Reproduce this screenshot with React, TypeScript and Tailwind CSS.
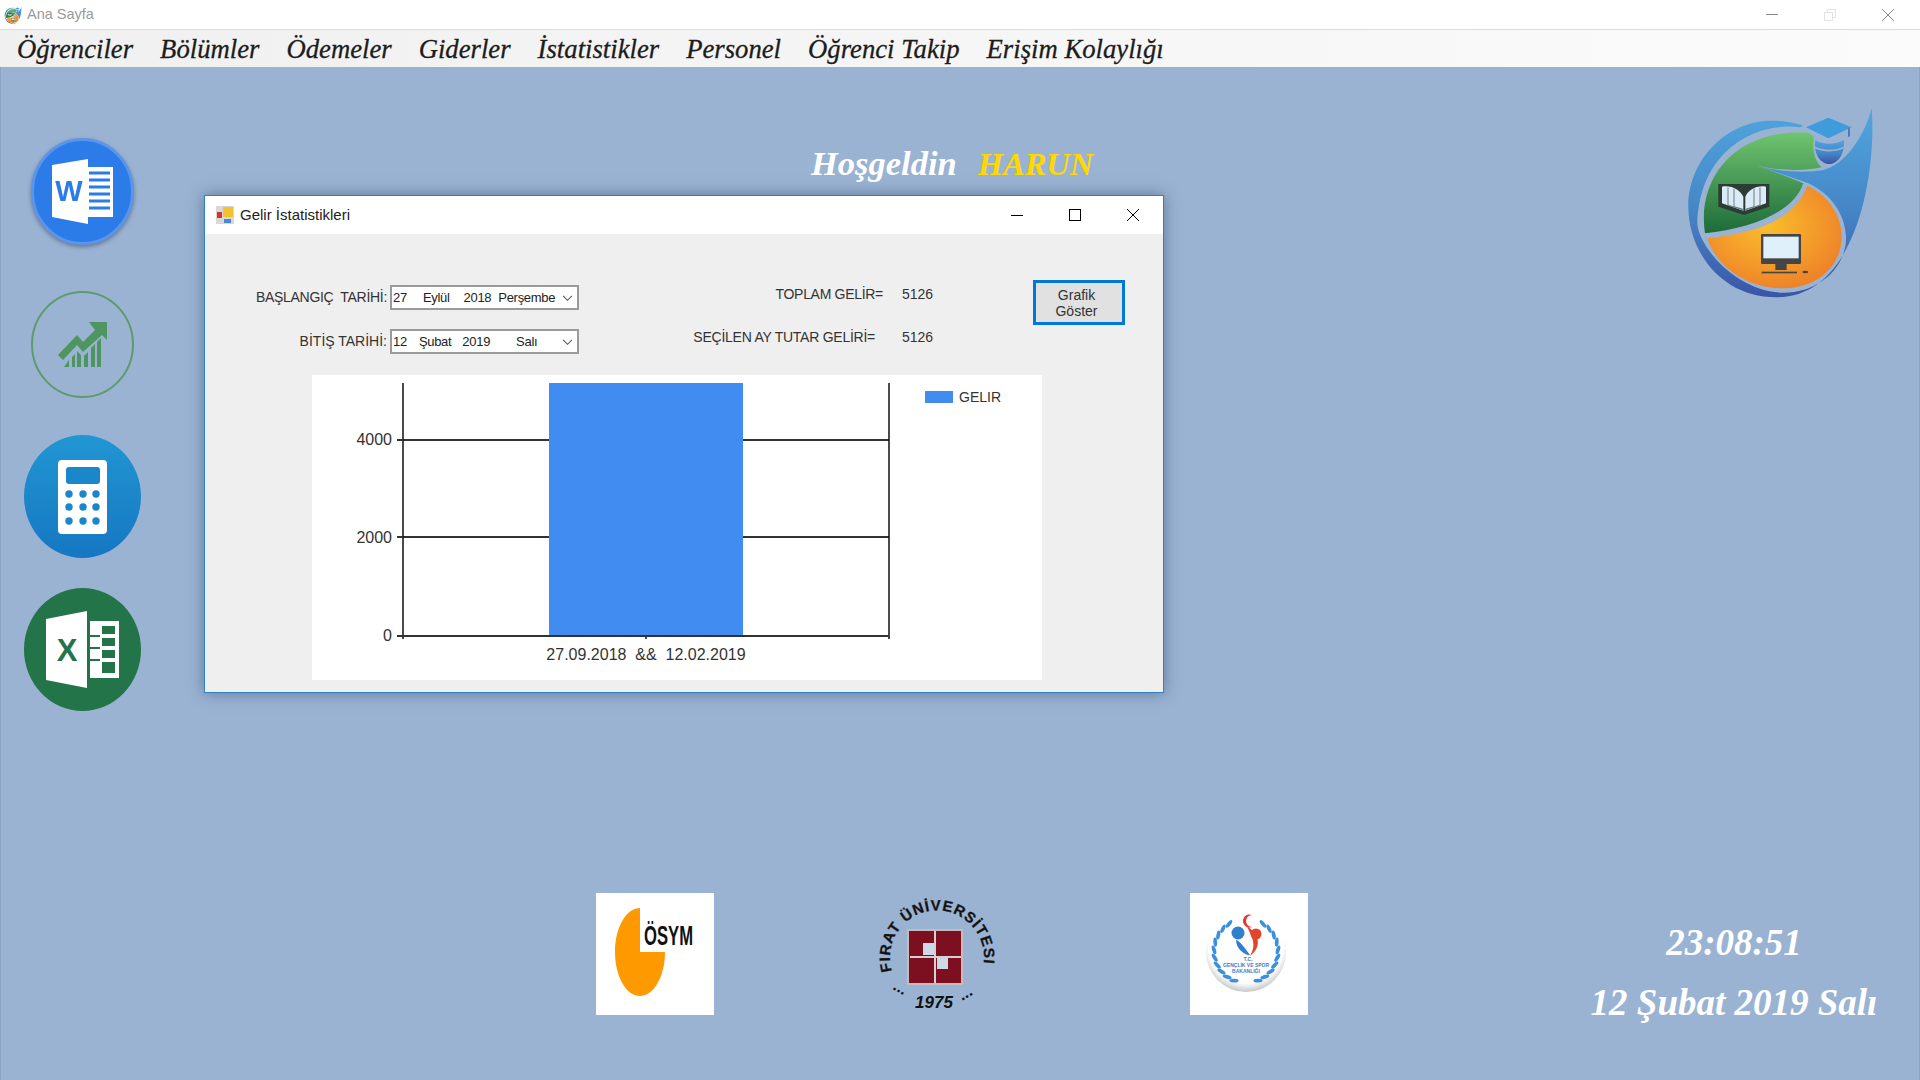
const serif = "font-['Liberation_Serif',serif]";
const sans = "font-['Liberation_Sans',Arial,sans-serif]";

const MENU_ITEMS = [
  "Öğrenciler",
  "Bölümler",
  "Ödemeler",
  "Giderler",
  "İstatistikler",
  "Personel",
  "Öğrenci Takip",
  "Erişim Kolaylığı",
];

// angles (deg, 0 = bottom) of the laurel leaves round the ministry badge
const LAUREL_ANGLES = [22, 36, 50, 64, 78, 92, 106, 120, 134, 148];

const Logo = ({ className, id }: { className: string; id: string }) => (
  <svg viewBox="0 0 720 660" className={className}>
    <defs>
      <linearGradient id={`${id}-blue`} x1="0" y1="0" x2="0" y2="1">
        <stop offset="0" stopColor="#4fa6de" />
        <stop offset="0.55" stopColor="#4585c6" />
        <stop offset="1" stopColor="#3a55a6" />
      </linearGradient>
      <linearGradient id={`${id}-green`} x1="0" y1="0" x2="0" y2="1">
        <stop offset="0" stopColor="#6fc46f" />
        <stop offset="1" stopColor="#1d6b3a" />
      </linearGradient>
      <radialGradient id={`${id}-orange`} cx="0.45" cy="0.4" r="0.6">
        <stop offset="0" stopColor="#fbbd2c" />
        <stop offset="1" stopColor="#ee8429" />
      </radialGradient>
    </defs>
    <path
      d="M635 55 C650 250 590 622 350 622 C180 622 85 480 85 350 C85 200 210 92 330 92 C370 92 400 97 430 107 L420 112 C300 95 120 170 112 400 C115 470 230 606 370 608 C480 608 560 530 558 440 C555 370 510 310 445 280 L295 228 C360 245 430 250 490 240 C550 225 610 150 635 55Z"
      fill={`url(#${id}-blue)`}
    />
    <path
      d="M135 430 C110 270 220 115 445 128 L462 140 C455 180 465 215 485 232 C420 245 350 240 295 228 C340 245 390 262 430 280 C400 370 270 415 135 430Z"
      fill={`url(#${id}-green)`}
    />
    <path
      d="M142 445 C270 430 400 400 442 287 C510 320 545 380 545 440 C545 530 470 595 370 595 C260 595 170 530 142 445Z"
      fill={`url(#${id}-orange)`}
    />
    <path d="M466 150 C490 165 525 165 552 150 C555 190 535 222 508 222 C480 222 460 190 466 150Z" fill={`url(#${id}-blue)`} />
    <path d="M464 172 C490 185 525 185 552 172" stroke="#9ab3d2" strokeWidth="5" fill="none" />
    <path d="M505 83 L575 112 L505 145 L438 112Z" fill="#3f9bdc" />
    <path d="M567 115 V140" stroke="#3f6fb8" strokeWidth="5" />
    <path d="M175 282 V350 L252 375 L328 350 V282" fill="#2e3a34" />
    <path d="M186 290 C215 285 240 300 250 320 V362 L186 340Z M318 290 C290 285 265 300 256 320 V362 L318 340Z" fill="#dcecf7" />
    <path d="M204 292 V345 L250 360 M222 296 V350 L250 358 M300 292 V345 L256 360 M282 296 V350 L256 358" fill="none" stroke="#6d7d86" strokeWidth="3" />
    <rect x="303" y="432" width="120" height="90" rx="4" fill="#454545" />
    <rect x="310" y="440" width="106" height="65" fill="#dff0fb" />
    <rect x="346" y="522" width="34" height="18" fill="#454545" />
    <rect x="305" y="545" width="106" height="5" fill="#454545" />
    <ellipse cx="436" cy="546" rx="9" ry="4" fill="#454545" />
  </svg>
);

const WordIcon = () => (
  <svg viewBox="0 0 103 107" className="w-[103px] h-[107px] drop-shadow-[0_2px_2px_rgba(60,70,90,0.55)]">
    <ellipse cx="51.5" cy="53.5" rx="50" ry="52" fill="#2b7be8" stroke="#5b95ea" strokeWidth="3" />
    <path d="M21 27 L57 21 V86 L21 79Z" fill="#fff" />
    <rect x="57" y="29" width="25" height="50" fill="#fff" />
    <path d="M58 35 H79 M58 42 H79 M58 49 H79 M58 56 H79 M58 63 H79 M58 70 H79" stroke="#2b7be8" strokeWidth="3" />
    <text x="38" y="63" textAnchor="middle" fontSize="29" fontWeight="700" fill="#2b7be8" fontFamily="Liberation Sans">W</text>
  </svg>
);

const ChartIcon = () => (
  <svg viewBox="0 0 103 107" className="w-[103px] h-[107px]">
    <ellipse cx="51.5" cy="53.5" rx="50.5" ry="52.5" fill="none" stroke="#5c9b6c" strokeWidth="2" />
    <path d="M27 64 L46 44 L52 51 L64 39 L58 31 L76 31 L76 49 L71 44 L52 61 L46 54 L32 69Z" fill="#4f9560" />
    <path d="M33 76 L38 69 V76Z M41 76 V66 L44 63 V76Z M46 76 V60 L50 64 V76Z M53 76 V65 L57 61 V76Z M60 76 V57 L64 53 V76Z M66 76 V51 L70 47 V76Z" fill="#4f9560" />
  </svg>
);

const CalculatorIcon = () => (
  <svg viewBox="0 0 117 123" className="w-[117px] h-[123px]">
    <defs>
      <linearGradient id="calc-bg" x1="0" y1="0" x2="0" y2="1">
        <stop offset="0" stopColor="#2196d3" />
        <stop offset="1" stopColor="#1677c2" />
      </linearGradient>
    </defs>
    <ellipse cx="58.5" cy="61.5" rx="58.5" ry="61.5" fill="url(#calc-bg)" />
    <rect x="34" y="25" width="49" height="74" rx="4" fill="#fff" />
    <rect x="42" y="32" width="34" height="17" rx="3" fill="#1b87cb" />
    {[45, 59, 72].map((x) =>
      [59, 72, 86].map((y) => <circle key={`${x}-${y}`} cx={x} cy={y} r="3.7" fill="#1b87cb" />),
    )}
  </svg>
);

const ExcelIcon = () => (
  <svg viewBox="0 0 117 123" className="w-[117px] h-[123px]">
    <ellipse cx="58.5" cy="61.5" rx="58.5" ry="61.5" fill="#24744a" />
    <path d="M22 31 L63 23 V100 L22 92Z" fill="#fff" />
    <rect x="66" y="33" width="29" height="57" fill="#fff" />
    <path
      d="M78 38 H91 V46 H78Z M78 50 H91 V58 H78Z M78 62 H91 V70 H78Z M78 74 H91 V85 H78Z M66 47 H76 V49 H66Z M66 59 H76 V61 H66Z M66 71 H76 V73 H66Z"
      fill="#24744a"
    />
    <text x="43" y="73" textAnchor="middle" fontSize="31" fontWeight="700" fill="#24744a" fontFamily="Liberation Sans">X</text>
  </svg>
);

const OsymLogo = () => (
  <div className="w-[118px] h-[122px] bg-white">
    <svg viewBox="0 0 118 122" className="w-full h-full">
      <path d="M44 59 V15 C30 15 19 35 19 59 C19 83 30 103 44 103 C58 103 69 83 69 59Z" fill="#ff9900" />
      <text x="48" y="52" fontSize="27" fontWeight="700" textLength="49" lengthAdjust="spacingAndGlyphs" fill="#111" fontFamily="Liberation Sans">ÖSYM</text>
    </svg>
  </div>
);

const FiratLogo = () => (
  <svg viewBox="0 0 120 122" className="w-[120px] h-[122px]">
    <defs>
      <path id="firat-arc" d="M17 78 A47 47 0 1 1 107 78" />
    </defs>
    <text fontSize="15" fontWeight="700" fill="#111" stroke="#222" strokeWidth="0.3" fontFamily="Liberation Sans" letterSpacing="0.9">
      <textPath href="#firat-arc" startOffset="0">FIRAT ÜNİVERSİTESİ</textPath>
    </text>
    <rect x="32" y="36" width="56" height="56" fill="#c9b9bb" />
    <rect x="34" y="38" width="52" height="52" fill="#7c1020" />
    <path d="M35 64 H60 M60 38 V90 M60 64 H86" stroke="#d8d0d0" strokeWidth="2" />
    <rect x="48" y="50" width="11" height="12" fill="#cdd9e6" />
    <rect x="62" y="65" width="11" height="11" fill="#cdd9e6" />
    <text x="17" y="96" fontSize="16" fontWeight="700" fill="#111" fontFamily="Liberation Sans" transform="rotate(28 17 96)">...</text>
    <text x="87" y="108" fontSize="16" fontWeight="700" fill="#111" fontFamily="Liberation Sans" transform="rotate(-30 87 108)">...</text>
    <text x="59" y="115" textAnchor="middle" fontSize="17" fontWeight="700" fontStyle="italic" fill="#111" fontFamily="Liberation Sans">1975</text>
  </svg>
);

const BakanlikLogo = () => (
  <div className="w-[118px] h-[122px] bg-white">
    <svg viewBox="0 0 118 122" className="w-full h-full">
      <defs>
        <radialGradient id="badge-bg" cx="0.5" cy="0.42" r="0.6">
          <stop offset="0.78" stopColor="#ffffff" />
          <stop offset="1" stopColor="#bdbdbd" />
        </radialGradient>
      </defs>
      <ellipse cx="56" cy="59" rx="40" ry="40" fill="url(#badge-bg)" />
      {LAUREL_ANGLES.map((deg) => {
        const rad = (deg * Math.PI) / 180;
        const dx = 32 * Math.sin(rad);
        const y = 58 + 32 * Math.cos(rad);
        return (
          <g key={deg} fill="#3b8fdc">
            <ellipse cx={56 - dx} cy={y} rx="1.9" ry="4.6" transform={`rotate(${70 + deg} ${56 - dx} ${y})`} />
            <ellipse cx={56 + dx} cy={y} rx="1.9" ry="4.6" transform={`rotate(${-70 - deg} ${56 + dx} ${y})`} />
          </g>
        );
      })}
      <path d="M62 22 A6.5 6.5 0 1 0 62 34 A5.5 5.5 0 1 1 62 22Z" fill="#e2352b" />
      <circle cx="48" cy="40" r="6.5" fill="#2f7fd0" />
      <circle cx="66" cy="41" r="5.5" fill="#e2452b" />
      <path d="M46 47 C50 48 54 54 60 62 C58 63 46 58 46 47Z" fill="#2f7fd0" />
      <path d="M57 33 C60 42 68 50 60 63 C72 54 70 42 57 33Z" fill="#e2452b" />
      <text x="58" y="68" textAnchor="middle" fontSize="5" fontWeight="700" fill="#3b80c4" fontFamily="Liberation Sans">T.C.</text>
      <text x="56" y="74" textAnchor="middle" fontSize="5" fontWeight="700" fill="#3b80c4" fontFamily="Liberation Sans">GENÇLİK VE SPOR</text>
      <text x="56" y="80" textAnchor="middle" fontSize="5" fontWeight="700" fill="#3b80c4" fontFamily="Liberation Sans">BAKANLIĞI</text>
    </svg>
  </div>
);

const DatePicker = ({ parts }: { parts: [string, number][] }) => (
  <div className="relative flex items-center w-[189px] h-[25px] bg-white border-2 border-[#9a9a9a] pl-[1px] text-[13px] tracking-[-0.3px] text-[#222] whitespace-nowrap">
    {parts.map(([text, margin]) => (
      <span key={text} className="shrink-0" style={{ marginLeft: margin }}>
        {text}
      </span>
    ))}
    <svg viewBox="0 0 12 8" className="absolute right-[4px] top-[8px] w-[11px] h-[7px]">
      <path d="M1 1 L6 6 L11 1" fill="none" stroke="#555" strokeWidth="1.2" />
    </svg>
  </div>
);

const RevenueChart = () => (
  <div className="ml-[107px] mt-[21px] w-[730px] h-[305px] bg-white">
    <svg viewBox="0 0 730 305" className="w-full h-full" fontFamily="Liberation Sans">
      <path d="M91 65 H577 M91 162 H577" stroke="#333" strokeWidth="2" />
      <rect x="237" y="8" width="194" height="253" fill="#418cf0" />
      <path d="M91 8 V264 M577 8 V264 M334 261 V264" stroke="#111" strokeWidth="1.5" />
      <path d="M85 65 H91 M85 162 H91 M85 261 H577" stroke="#333" strokeWidth="2" />
      <g fontSize="16" fill="#333" textAnchor="end">
        <text x="80" y="70">4000</text>
        <text x="80" y="168">2000</text>
        <text x="80" y="266">0</text>
      </g>
      <text x="334" y="285" fontSize="16" fill="#333" textAnchor="middle" xmlSpace="preserve">27.09.2018  &amp;&amp;  12.02.2019</text>
      <rect x="613" y="16" width="28" height="12" fill="#418cf0" />
      <text x="647" y="27" fontSize="14" fill="#333">GELIR</text>
    </svg>
  </div>
);

const GelirDialog = () => (
  <div className={`absolute left-[204px] top-[195px] w-[960px] h-[498px] flex flex-col bg-[#efefef] border border-[#2f80c4] shadow-[0_0_14px_rgba(50,70,100,0.55)] ${sans}`}>
    {/* Title bar */}
    <div className="flex items-center h-[38px] bg-white shrink-0 pl-[11px]">
      <svg viewBox="0 0 18 18" className="w-[18px] h-[18px]">
        <rect width="18" height="18" fill="#d8d8d8" />
        <rect x="7" y="1" width="10" height="10" fill="#f2c230" />
        <rect x="1" y="6" width="5" height="6" fill="#d8332a" />
        <rect x="8" y="13" width="7" height="4" fill="#4f86d8" />
      </svg>
      <span className="ml-[6px] text-[15px] text-[#222]">Gelir İstatistikleri</span>
      <div className="ml-auto flex items-center gap-[46px] pr-[24px]">
        <span className="w-[12px] h-px bg-black" />
        <span className="w-[12px] h-[12px] border border-black" />
        <svg viewBox="0 0 12 12" className="w-[12px] h-[12px]">
          <path d="M0 0 L12 12 M12 0 L0 12" stroke="#000" strokeWidth="1" />
        </svg>
      </div>
    </div>

    <div className="flex-1">
      <div className="flex items-start pt-[46px] h-[120px] text-[14px] text-[#333]">
        <div className="w-[374px] flex flex-col gap-[19px] mt-[5px]">
          <div className="flex items-center justify-end gap-[3px]">
            <span className="whitespace-pre tracking-[-0.3px]">BAŞLANGIÇ  TARİHİ:</span>
            <DatePicker parts={[["27", 0], ["Eylül", 16], ["2018", 14], ["Perşembe", 7]]} />
          </div>
          <div className="flex items-center justify-end gap-[3px]">
            <span>BİTİŞ TARİHİ:</span>
            <DatePicker parts={[["12", 0], ["Şubat", 12], ["2019", 11], ["Salı", 26]]} />
          </div>
        </div>
        <div className="w-[353px] flex flex-col gap-[23px] mt-[4px]">
          <div className="flex justify-end h-[20px] items-center">
            <span className="tracking-[-0.3px]">TOPLAM GELİR=</span>
            <span className="ml-[19px] w-[30px]">5126</span>
          </div>
          <div className="flex justify-end h-[20px] items-center">
            <span className="tracking-[-0.25px]">SEÇİLEN AY TUTAR GELİRİ=</span>
            <span className="ml-[27px] w-[30px]">5126</span>
          </div>
        </div>
        <button className="ml-[101px] w-[92px] h-[45px] bg-[#e1e1e1] border-[3px] border-[#0078d7] pr-[5px] text-[14px] leading-[16px] text-[#333]">
          Grafik
          <br />
          Göster
        </button>
      </div>
      <RevenueChart />
    </div>
  </div>
);

export default function App() {
  return (
    <div className={`relative w-[1920px] h-[1080px] flex flex-col overflow-hidden bg-[#9ab3d2] ${sans}`}>
      {/* Window title bar */}
      <div className="flex items-center h-[29px] bg-white shrink-0 pl-[2px]">
        <Logo id="app-icon" className="w-[22px] h-[20px]" />
        <span className="ml-[3px] text-[14.5px] text-[#9a9a9a]">Ana Sayfa</span>
        <div className="ml-auto flex items-center gap-[46px] pr-[26px]">
          <span className="w-[12px] h-[1px] bg-[#8a8a8a]" />
          <svg viewBox="0 0 12 12" className="w-[12px] h-[12px]">
            <path d="M0.5 3.5 H8.5 V11.5 H0.5Z M3.5 3.5 V0.5 H11.5 V8.5 H8.5" fill="none" stroke="#e2e2e2" />
          </svg>
          <svg viewBox="0 0 12 12" className="w-[12px] h-[12px]">
            <path d="M0 0 L12 12 M12 0 L0 12" stroke="#8a8a8a" strokeWidth="1" />
          </svg>
        </div>
      </div>

      {/* Menu */}
      <div className={`flex items-center gap-[27px] h-[38px] pl-[17px] pt-[2px] shrink-0 border-t border-[#dcdcdc] bg-gradient-to-r from-[#f0f0f0] to-[#fbfbfb] text-[26.7px] italic text-[#1c1c1c] [-webkit-text-stroke:0.3px_#1c1c1c] ${serif}`}>
        {MENU_ITEMS.map((item) => (
          <span key={item} className="leading-none">
            {item}
          </span>
        ))}
      </div>

      <div className="flex flex-1 min-h-0 shadow-[inset_1px_0_0_#8ca4c2,inset_-1px_0_0_#8ca4c2]">
        {/* Shortcut icons */}
        <div className="w-[165px] shrink-0 flex flex-col items-center pt-[71px]">
          <WordIcon />
          <div className="mt-[46px]">
            <ChartIcon />
          </div>
          <div className="mt-[37px]">
            <CalculatorIcon />
          </div>
          <div className="mt-[30px]">
            <ExcelIcon />
          </div>
        </div>

        {/* Welcome and logos */}
        <div className="flex-1 flex flex-col justify-between pb-[65px]">
          <div className={`pl-[646px] pt-[76px] flex items-baseline gap-[21px] leading-[40px] font-bold italic ${serif}`}>
            <span className="text-[34.5px] text-white">Hoşgeldin</span>
            <span className="text-[32.5px] text-[#ffd800]">HARUN</span>
          </div>
          <div className="flex items-start pl-[431px]">
            <OsymLogo />
            <div className="ml-[161px]">
              <FiratLogo />
            </div>
            <div className="ml-[195px]">
              <BakanlikLogo />
            </div>
          </div>
        </div>

        {/* Logo and clock */}
        <div className="w-[340px] shrink-0 flex flex-col justify-between pt-[23px] pl-[80px] pb-[57px]">
          <Logo id="main-logo" className="w-[240px] h-[220px]" />
          <div className={`-ml-[80px] w-[308px] flex flex-col gap-[20px] items-center text-[37px] leading-[40px] font-bold italic text-white whitespace-nowrap ${serif}`}>
            <span>23:08:51</span>
            <span>12 Şubat 2019 Salı</span>
          </div>
        </div>
      </div>

      <GelirDialog />
    </div>
  );
}
